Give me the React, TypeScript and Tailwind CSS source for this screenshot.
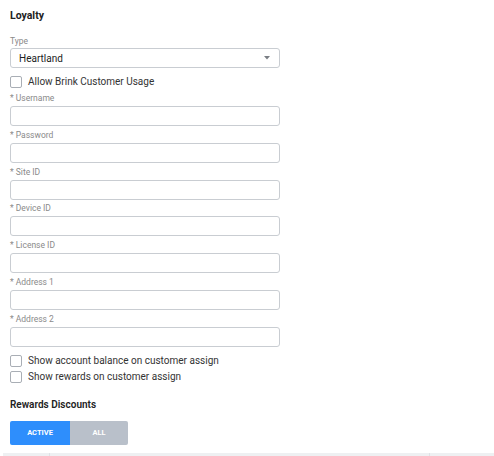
const fields = ["Username", "Password", "Site ID", "Device ID", "License ID", "Address 1", "Address 2"];

const Checkbox = ({ label }: { label: string }) => (
  <label className="flex items-center gap-[6px] h-[16px]">
    <span className="block size-[12px] rounded-[2px] border border-[#a9aeb5] bg-white" />
    <span className="text-[10px] text-[#333] leading-none">{label}</span>
  </label>
);

const Field = ({ label }: { label: string }) => (
  <div className="flex flex-col">
    <p className="text-[8.5px] leading-[10px] text-[#8a8a8a]">* {label}</p>
    <div className="mt-[3px] h-[20px] w-[270px] rounded-[3px] border border-[#c9cdd2] bg-white" />
  </div>
);

export default function App() {
  return (
    <div className="w-[494px] h-[456px] bg-white overflow-hidden font-['Roboto',sans-serif] flex flex-col">
      <div className="px-[10px] flex flex-col">
        <h2 className="mt-[9px] text-[10.5px] leading-[13px] font-bold text-[#222]">Loyalty</h2>

        <p className="mt-[14px] text-[8.5px] leading-[10px] text-[#8a8a8a]">Type</p>
        <div className="mt-[2px] h-[20px] w-[270px] rounded-[3px] border border-[#c9cdd2] flex items-center justify-between pl-[8px] pr-[9px]">
          <span className="text-[10px] text-[#222]">Heartland</span>
          <svg width="6" height="4" viewBox="0 0 6 4">
            <path d="M0 0 L6 0 L3 3.5 Z" fill="#7a7e84" />
          </svg>
        </div>

        <div className="mt-[6px]">
          <Checkbox label="Allow Brink Customer Usage" />
        </div>

        <div className="mt-[3px] flex flex-col gap-[3.8px]">
          {fields.map((f) => (
            <Field key={f} label={f} />
          ))}
        </div>

        <div className="mt-[6px] flex flex-col">
          <Checkbox label="Show account balance on customer assign" />
          <Checkbox label="Show rewards on customer assign" />
        </div>

        <h3 className="mt-[14px] text-[10px] leading-[12px] font-semibold text-[#222]">Rewards Discounts</h3>

        <div className="mt-[10px] flex h-[24px] w-[118px] rounded-[2px] overflow-hidden">
          <button className="w-[60px] bg-[#2e8efc] text-white text-[7.5px] font-bold">ACTIVE</button>
          <button className="flex-1 bg-[#b9c0ca] text-white text-[7.5px] font-bold">ALL</button>
        </div>
      </div>

      <div className="mt-[8px] ml-[3px] h-[3px] bg-[#eef0f2] flex">
        <div className="w-[47px] border-r border-[#dfe2e6]" />
        <div className="w-[380px] border-r border-[#dfe2e6]" />
      </div>
    </div>
  );
}
